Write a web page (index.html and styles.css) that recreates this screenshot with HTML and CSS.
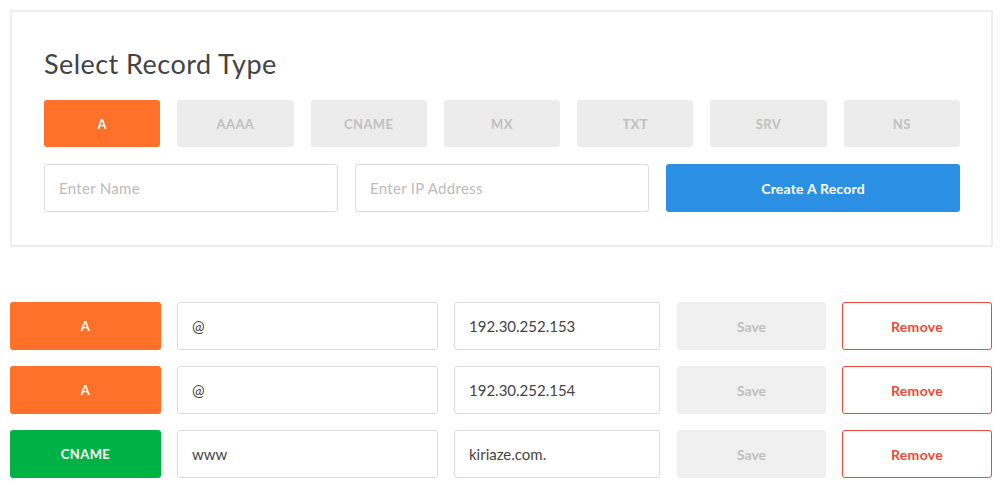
FILE: index.html
```html
<!DOCTYPE html>
<html>
<head>
<meta charset="utf-8">
<link rel="stylesheet" href="styles.css">
</head>
<body>
<div class="page">
  <section class="panel">
    <h1 class="title">Select Record Type</h1>
    <div class="types">
      <button class="type active">A</button>
      <button class="type">AAAA</button>
      <button class="type">CNAME</button>
      <button class="type">MX</button>
      <button class="type">TXT</button>
      <button class="type">SRV</button>
      <button class="type">NS</button>
    </div>
    <div class="create">
      <input class="field" placeholder="Enter Name">
      <input class="field" placeholder="Enter IP Address">
      <button class="create-btn">Create A Record</button>
    </div>
  </section>
  <div class="records">
    <div class="record">
      <div class="badge badge-a">A</div>
      <input class="field" value="@">
      <input class="field" value="192.30.252.153">
      <button class="save">Save</button>
      <button class="remove">Remove</button>
    </div>
    <div class="record">
      <div class="badge badge-a">A</div>
      <input class="field" value="@">
      <input class="field" value="192.30.252.154">
      <button class="save">Save</button>
      <button class="remove">Remove</button>
    </div>
    <div class="record">
      <div class="badge badge-cname">CNAME</div>
      <input class="field" value="www">
      <input class="field" value="kiriaze.com.">
      <button class="save">Save</button>
      <button class="remove">Remove</button>
    </div>
  </div>
</div>
</body>
</html>
```
FILE: styles.css
```css
* { box-sizing: border-box; }
html, body { margin: 0; padding: 0; background: #fff; }
body { font-family: "Lato", "Liberation Sans", sans-serif; color: #444; }
.page { padding: 10px 10px 0 10px; width: 1003px; }
.panel {
  border: 2px solid #eeeeee;
  padding: 37px 31px 33px 32px;
}
.title {
  margin: 0 0 21px 0;
  font-size: 27px;
  font-weight: 400;
  line-height: 30px;
  color: #444;
  letter-spacing: 0.45px;
}
.types { display: grid; grid-template-columns: repeat(7, 1fr); gap: 17px; }
.type {
  height: 47px;
  border: none;
  border-radius: 3px;
  background: #ececec;
  color: #c0c0c0;
  font-family: inherit;
  font-size: 13px;
  font-weight: 700;
  letter-spacing: 0.4px;
}
.type.active { background: #ff7029; color: #fff; }
.create { display: grid; grid-template-columns: repeat(3, 1fr); gap: 17px; margin-top: 17px; }
.field {
  height: 48px;
  border: 1px solid #dddddd;
  border-radius: 3px;
  padding: 0 14px;
  font-family: inherit;
  font-size: 15px;
  color: #444;
  background: #fff;
  outline: none;
  width: 100%;
}
.field::placeholder { color: #bbbbbb; letter-spacing: 0.3px; }
.create-btn {
  height: 48px;
  border: none;
  border-radius: 3px;
  background: #2b90e3;
  color: #fff;
  font-family: inherit;
  font-size: 14px;
  font-weight: 700;
  letter-spacing: 0.2px;
}
.records { margin-top: 55px; display: flex; flex-direction: column; gap: 16px; }
.record {
  display: grid;
  grid-template-columns: 151px 261px 206px 150px 150px;
  column-gap: 16px;
  height: 48px;
}
.record > :nth-child(4) { margin-left: 1px; }
.badge {
  display: flex; align-items: center; justify-content: center;
  border-radius: 3px;
  color: #fff;
  font-size: 13px;
  font-weight: 700;
  letter-spacing: 0.4px;
}
.badge-a { background: #ff7029; }
.badge-cname { background: #00b246; }
.save {
  border: none;
  border-radius: 3px;
  background: #f0f0f0;
  color: #c0c0c0;
  font-family: inherit;
  font-size: 14px;
  font-weight: 700;
}
.remove {
  border: 1px solid #f0493a;
  border-radius: 3px;
  background: #fff;
  color: #f0493a;
  font-family: inherit;
  font-size: 14px;
  font-weight: 700;
  letter-spacing: 0.3px;
}
```
